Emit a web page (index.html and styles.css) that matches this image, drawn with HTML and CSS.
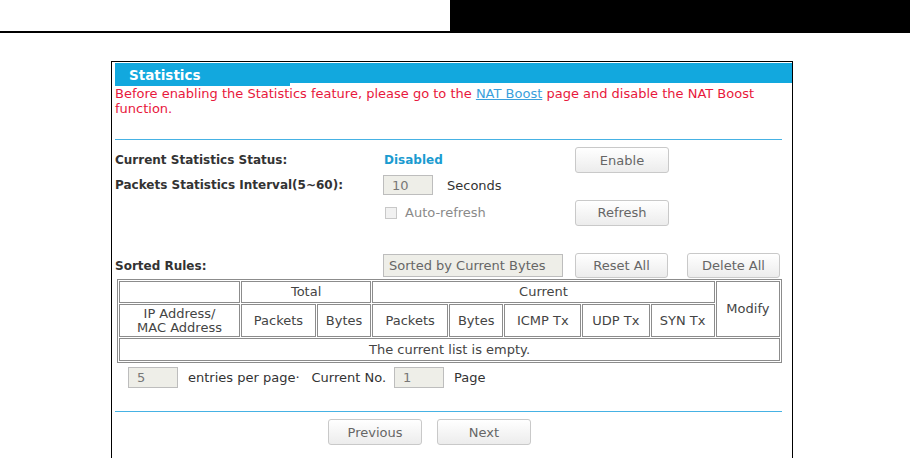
FILE: index.html
```html
<!DOCTYPE html>
<html lang="en">
<head>
    <meta charset="UTF-8">
    <title>Statistics</title>
    <link rel="stylesheet" href="styles.css">
</head>
<body>
    <div class="topbar">
        <div class="topbar-left"></div>
        <div class="topbar-right"></div>
    </div>

    <div class="panel">
        <div class="title-bar">
            <div class="title-tab">Statistics</div>
        </div>

        <div class="content">
            <p class="notice"><span>Before enabling the Statistics feature, please go to the </span><a href="#">NAT Boost</a><span> page and disable the NAT Boost</span><br><span>function.</span></p>
            <hr class="sep sep-top">

            <div class="form-grid">
                <div class="label row1">Current Statistics Status:</div>
                <div class="status row1">Disabled</div>
                <div class="row1"><button class="btn">Enable</button></div>
                <div class="row1"></div>

                <div class="label row2">Packets Statistics Interval(5~60):</div>
                <div class="row2 inline">
                    <input class="field field-small" type="text" value="10" disabled>
                    <span class="unit">Seconds</span>
                </div>
                <div class="row2"></div>
                <div class="row2"></div>

                <div class="row3"></div>
                <div class="row3 inline">
                    <span class="checkbox"></span>
                    <span class="muted">Auto-refresh</span>
                </div>
                <div class="row3"><button class="btn">Refresh</button></div>
                <div class="row3"></div>

                <div class="label row4">Sorted Rules:</div>
                <div class="row4"><div class="select">Sorted by Current Bytes</div></div>
                <div class="row4"><button class="btn btn-narrow">Reset All</button></div>
                <div class="row4"><button class="btn btn-narrow">Delete All</button></div>
            </div>

            <table class="rules">
                <tr class="head1">
                    <td class="c-ip"></td>
                    <td colspan="2">Total</td>
                    <td colspan="6">Current</td>
                    <td rowspan="2" class="c-mod">Modify</td>
                </tr>
                <tr class="head2">
                    <td>IP Address/<br>MAC Address</td>
                    <td class="c-tp">Packets</td>
                    <td class="c-tb">Bytes</td>
                    <td class="c-cp">Packets</td>
                    <td class="c-cb">Bytes</td>
                    <td class="c-icmp">ICMP Tx</td>
                    <td class="c-udp">UDP Tx</td>
                    <td class="c-syn">SYN Tx</td>
                </tr>
                <tr class="empty">
                    <td colspan="10">The current list is empty.</td>
                </tr>
            </table>

            <div class="pager">
                <input class="field field-small" type="text" value="5" disabled>
                <span class="pager-text">entries per page·</span>
                <span class="pager-text pager-no">Current No.</span>
                <input class="field field-small" type="text" value="1" disabled>
                <span class="pager-text">Page</span>
            </div>

            <hr class="sep sep-bottom">

            <div class="nav-buttons">
                <button class="btn">Previous</button>
                <button class="btn">Next</button>
            </div>
        </div>
    </div>
</body>
</html>
```

FILE: styles.css
```css
* {
    margin: 0;
    padding: 0;
    box-sizing: border-box;
}

body {
    background: #ffffff;
    font-family: "DejaVu Sans", Verdana, sans-serif;
    font-size: 13px;
    color: #333333;
    width: 910px;
    height: 458px;
    overflow: hidden;
}

/* faixa do topo */
.topbar {
    display: flex;
    height: 33px;
}

.topbar-left {
    width: 450px;
    border-bottom: 2px solid #000000;
}

.topbar-right {
    flex: 1;
    background: #000000;
}

.panel {
    margin: 28px 0 0 111px;
    width: 682px;
    height: 410px;
    border: 1px solid #000000;
    padding: 1px 0 0 3px;
}

.title-bar {
    display: flex;
    align-items: flex-start;
    height: 20px;
    background: #12a8de;
}

.title-tab {
    width: 175px;
    height: 23px;
    background: #12a8de;
    color: #ffffff;
    font-weight: bold;
    font-size: 13.5px;
    line-height: 24px;
    padding-left: 14px;
}

.content {
    padding-right: 10px;
}

.notice {
    margin-top: 3px;
    color: #e8183c;
    line-height: 15px;
}

.notice a {
    color: #3a9fdc;
}

.sep {
    border: none;
    height: 1px;
    background: #46b2e4;
}

.sep-top {
    margin-top: 23px;
}

.sep-bottom {
    margin-top: 23px;
}

.form-grid {
    display: grid;
    grid-template-columns: 268px 192px 112px 94px;
    margin-top: 7px;
}

.form-grid > div {
    display: flex;
    align-items: center;
}

.row1 {
    height: 26px;
}

.row2 {
    height: 22px;
    margin-top: 1px;
}

.row3 {
    height: 25px;
    margin-top: 4px;
}

.row4 {
    height: 25px;
    margin-top: 28px;
}

.label {
    font-weight: bold;
    font-size: 12px;
    color: #333333;
}

.status {
    color: #1b9bd0;
    font-weight: bold;
    font-size: 12px;
    padding-left: 1px;
}

.inline {
    gap: 14px;
}

.btn {
    width: 94px;
    height: 26px;
    border: 1px solid #c9c9c9;
    border-radius: 3px;
    background: linear-gradient(#ffffff, #ececec);
    color: #666666;
    font-family: "DejaVu Sans", Verdana, sans-serif;
    font-size: 13px;
}

.btn-narrow {
    width: 93px;
    height: 25px;
}

.field {
    height: 20px;
    border: 1px solid #bdbdbd;
    background: #eeeee8;
    color: #777777;
    font-family: "DejaVu Sans", Verdana, sans-serif;
    font-size: 13px;
    padding-left: 8px;
}

.field-small {
    width: 50px;
}

.unit {
    color: #333333;
}

.checkbox {
    display: inline-block;
    width: 12px;
    height: 12px;
    margin-left: 2px;
    border: 1px solid #c8c8c8;
    background: #f1f1f1;
}

.inline .checkbox + .muted {
    margin-left: -6px;
}

.muted {
    color: #8a8a8a;
}

.select {
    width: 180px;
    height: 23px;
    line-height: 21px;
    border: 1px solid #bdbdbd;
    background: #eeeee8;
    color: #666666;
    padding-left: 5px;
}

/* tabela de regras */
.rules {
    margin: 1px 0 0 2px;
    width: 665px;
    border: 1px solid #8c8c8c;
    border-collapse: separate;
    border-spacing: 1px;
    color: #444444;
    text-align: center;
}

.rules td {
    border: 1px solid #8c8c8c;
    line-height: 14px;
    padding: 0;
}

.head1 td {
    height: 22px;
}

.head2 td {
    height: 33px;
}

.empty td {
    height: 23px;
}

.c-ip { width: 124px; }
.c-tp { width: 76px; }
.c-tb { width: 55px; }
.c-cp { width: 77px; }
.c-cb { width: 55px; }
.c-icmp { width: 79px; }
.c-udp { width: 69px; }
.c-syn { width: 66px; }
.c-mod { width: 65px; }

.pager {
    display: flex;
    align-items: center;
    margin-top: 3px;
    padding-left: 13px;
    height: 22px;
}

.pager .field {
    height: 21px;
}

.pager-text {
    margin-left: 10px;
}

.pager-no {
    margin-left: 12px;
    margin-right: 8px;
}

.nav-buttons {
    display: flex;
    gap: 15px;
    margin-top: 7px;
    padding-left: 213px;
}
```
